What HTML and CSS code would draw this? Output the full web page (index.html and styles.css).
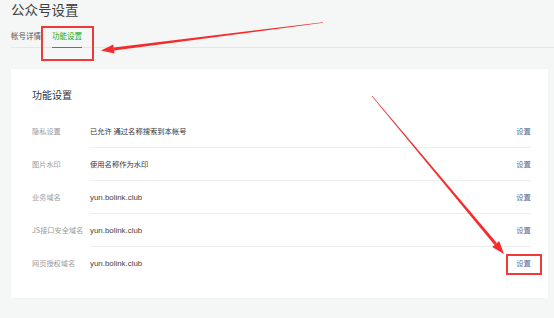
FILE: index.html
```html
<!DOCTYPE html>
<html lang="zh-CN">
<head>
<meta charset="utf-8">
<title>公众号设置</title>
<link rel="stylesheet" href="styles.css">
</head>
<body>
<div class="page">
  <h1 class="page-title">公众号设置</h1>
  <div class="tabs">
    <a class="tab">帐号详情</a>
    <a class="tab tab-active">功能设置<span class="mark mark-tab"></span></a>
  </div>
  <section class="card">
    <h2 class="card-title">功能设置</h2>
    <div class="row">
      <div class="label">隐私设置</div>
      <div class="body"><span class="value">已允许 通过名称搜索到本帐号</span><a class="action">设置</a></div>
    </div>
    <div class="row">
      <div class="label">图片水印</div>
      <div class="body"><span class="value">使用名称作为水印</span><a class="action">设置</a></div>
    </div>
    <div class="row">
      <div class="label">业务域名</div>
      <div class="body"><span class="value latin">yun.bolink.club</span><a class="action">设置</a></div>
    </div>
    <div class="row">
      <div class="label">JS接口安全域名</div>
      <div class="body"><span class="value latin">yun.bolink.club</span><a class="action">设置</a></div>
    </div>
    <div class="row">
      <div class="label">网页授权域名</div>
      <div class="body"><span class="value latin">yun.bolink.club</span><a class="action">设置<span class="mark mark-action"></span></a></div>
    </div>
  </section>
</div>
<svg class="arrows" width="554" height="318" viewBox="0 0 554 318">
  <polygon fill="#f42c2c" points="323.04,22.8 322.96,22.2 113.7,47.4 114.1,50.4"/>
  <polygon fill="#f42c2c" points="101,50.5 113.3,44.4 114.5,53.4"/>
  <polygon fill="#f42c2c" points="371.8,96.2 372.2,95.8 496.85,243.04 494.55,244.96"/>
  <polygon fill="#f42c2c" points="504,254 492.2,246.9 499.2,241.1"/>
</svg>
</body>
</html>
```
FILE: styles.css
```css
html, body {
  margin: 0;
  padding: 0;
  background: #f5f6f6;
}
body {
  width: 554px;
  height: 318px;
  overflow: hidden;
  position: relative;
  font-family: "Noto Sans CJK SC", "Noto Sans", sans-serif;
  color: #353535;
}
.page {
  padding-left: 11px;
}
.page-title {
  margin: 0;
  font-size: 13.5px;
  line-height: 18px;
  font-weight: 400;
  color: #3e3e3e;
}
.tabs {
  display: flex;
  gap: 11px;
  border-bottom: 1px solid #e6e7e7;
}
.tab {
  position: relative;
  padding-top: 12px;
  padding-bottom: 4px;
  margin-bottom: -1px;
  font-size: 7.5px;
  line-height: 12px;
  color: #555;
  border-bottom: 2px solid transparent;
}
.tab-active {
  color: #1aad19;
  border-bottom: 1.5px solid #1aad19;
  padding-bottom: 4.5px;
}
.mark {
  position: absolute;
  border: 2px solid #f03a3a;
  box-sizing: border-box;
}
.mark-tab {
  left: -11px;
  right: -12px;
  top: 8px;
  bottom: -14px;
}
.card {
  margin: 21px 6px 0 0;
  background: #fff;
  padding: 19px 17px 19px 21px;
  box-shadow: 0 0 1px rgba(0, 0, 0, 0.06);
}
.card-title {
  margin: 0 0 13px;
  font-size: 10px;
  line-height: 14px;
  font-weight: 400;
  color: #333;
}
.row {
  display: flex;
}
.label {
  width: 58px;
  flex: none;
  font-size: 7.2px;
  line-height: 32px;
  color: #9a9a9a;
  white-space: nowrap;
}
.body {
  flex: 1;
  display: flex;
  justify-content: space-between;
  align-items: center;
  height: 32px;
  border-bottom: 1px solid #eeeeee;
}
.row:last-child .body {
  border-bottom: none;
}
.value {
  font-size: 7.3px;
  color: #353535;
}
.value.latin {
  font-family: "Liberation Sans", Arial, sans-serif;
  font-size: 7.9px;
  color: #444;
}
.action {
  position: relative;
  font-size: 7.4px;
  line-height: 10px;
  color: #576b95;
}
.mark-action {
  left: -10px;
  right: -10.5px;
  top: -4px;
  bottom: -7px;
}
.arrows {
  position: absolute;
  left: 0;
  top: 0;
  pointer-events: none;
}
```
